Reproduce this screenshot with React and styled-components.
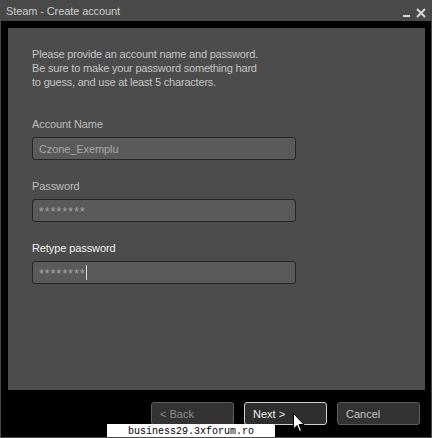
import React from 'react'
import styled, { createGlobalStyle } from 'styled-components'

const Global = createGlobalStyle`
  html, body {
    margin: 0;
    padding: 0;
    background: #000;
  }
  body {
    font-family: "Liberation Sans", Arial, sans-serif;
    font-size: 11px;
  }
`

const Window = styled.div`
  position: relative;
  width: 432px;
  height: 438px;
  box-sizing: border-box;
  background: #000;
  border: 1px solid #4a4a4a;
  border-top: none;
  display: flex;
  flex-direction: column;
  overflow: hidden;
`

const TitleBar = styled.div`
  height: 21px;
  background: #494949;
  display: flex;
  align-items: center;
  justify-content: space-between;
  padding: 0 5px 0 5px;
  color: #cdcdcd;
  font-size: 11px;
  letter-spacing: -0.1px;
`

const TitleButtons = styled.div`
  display: flex;
  align-items: flex-end;
  gap: 5px;
  padding-top: 5px;
`

const Panel = styled.div`
  margin: 7px 6px 0 7px;
  height: 362px;
  background: #4c4c4c;
  padding: 19px 24px 0 24px;
  box-sizing: border-box;
  display: flex;
  flex-direction: column;
`

const Intro = styled.p`
  margin: 0 0 28px 0;
  color: #c4c4c4;
  line-height: 14px;
  letter-spacing: -0.2px;
`

const Field = styled.div`
  display: flex;
  flex-direction: column;
  margin-bottom: 19px;
`

const Label = styled.label`
  color: ${p => (p.active ? '#f2f2f2' : '#bdbdbd')};
  line-height: 14px;
  margin-bottom: 6px;
  letter-spacing: -0.1px;
`

const Input = styled.div`
  width: 264px;
  height: 23px;
  box-sizing: border-box;
  background: #5a5a5a;
  border: 1px solid #262626;
  border-radius: 3px;
  color: #a8a8a8;
  padding: 0 6px;
  display: flex;
  align-items: center;
  font-size: ${p => (p.secret ? '12px' : '11px')};
  letter-spacing: ${p => (p.secret ? '1.2px' : '-0.1px')};
  padding-top: ${p => (p.secret ? '3px' : '0')};
`

const Caret = styled.span`
  display: inline-block;
  width: 1px;
  height: 15px;
  background: #d8d8d8;
  margin-top: -3px;
`

const Footer = styled.div`
  display: flex;
  justify-content: flex-end;
  gap: 10px;
  padding: 12px 11px 0 0;
`

const Button = styled.button`
  width: 83px;
  height: 23px;
  box-sizing: border-box;
  background: ${p => (p.focus ? '#2e2e2e' : '#333')};
  border: 1px solid ${p => (p.focus ? '#d0d0d0' : '#5e5e5e')};
  border-radius: 3px;
  color: ${p => (p.disabled ? '#8e8e8e' : p.focus ? '#f0f0f0' : '#c4c4c4')};
  font-family: "Liberation Sans", Arial, sans-serif;
  font-size: 11px;
  text-align: left;
  padding: 0 0 0 8px;
`

const Watermark = styled.div`
  position: absolute;
  left: 106px;
  top: 424px;
  width: 168px;
  height: 14px;
  background: #fff;
  color: #000;
  font-family: "Liberation Mono", "Courier New", monospace;
  font-size: 10px;
  line-height: 15px;
  text-align: center;
`

const Cursor = styled.svg`
  position: absolute;
  left: 292px;
  top: 413px;
`

export default function App() {
  return (
    <>
      <Global />
      <Window>
        <TitleBar>
          <span>Steam - Create account</span>
          <TitleButtons>
            <svg width="8" height="10" viewBox="0 0 8 10">
              <rect x="0" y="7" width="7" height="2" fill="#d8d8d8" />
            </svg>
            <svg width="10" height="10" viewBox="0 0 10 10">
              <path d="M1 1 L9 9 M9 1 L1 9" stroke="#d8d8d8" strokeWidth="2" />
            </svg>
          </TitleButtons>
        </TitleBar>
        <Panel>
          <Intro>
            Please provide an account name and password.<br />
            Be sure to make your password something hard<br />
            to guess, and use at least 5 characters.
          </Intro>
          <Field>
            <Label>Account Name</Label>
            <Input>Czone_Exemplu</Input>
          </Field>
          <Field>
            <Label>Password</Label>
            <Input secret>********</Input>
          </Field>
          <Field>
            <Label active>Retype password</Label>
            <Input secret>********<Caret /></Input>
          </Field>
        </Panel>
        <Footer>
          <Button disabled>&lt; Back</Button>
          <Button focus>Next &gt;</Button>
          <Button>Cancel</Button>
        </Footer>
        <Watermark>business29.3xforum.ro</Watermark>
        <Cursor width="12" height="20" viewBox="0 0 12 20">
          <path d="M0.5 0.5 L0.5 16 L4 12.5 L6.5 18.5 L8.5 17.5 L6 11.5 L11 11.5 Z" fill="#fff" stroke="#000" strokeWidth="1" />
        </Cursor>
      </Window>
    </>
  )
}
